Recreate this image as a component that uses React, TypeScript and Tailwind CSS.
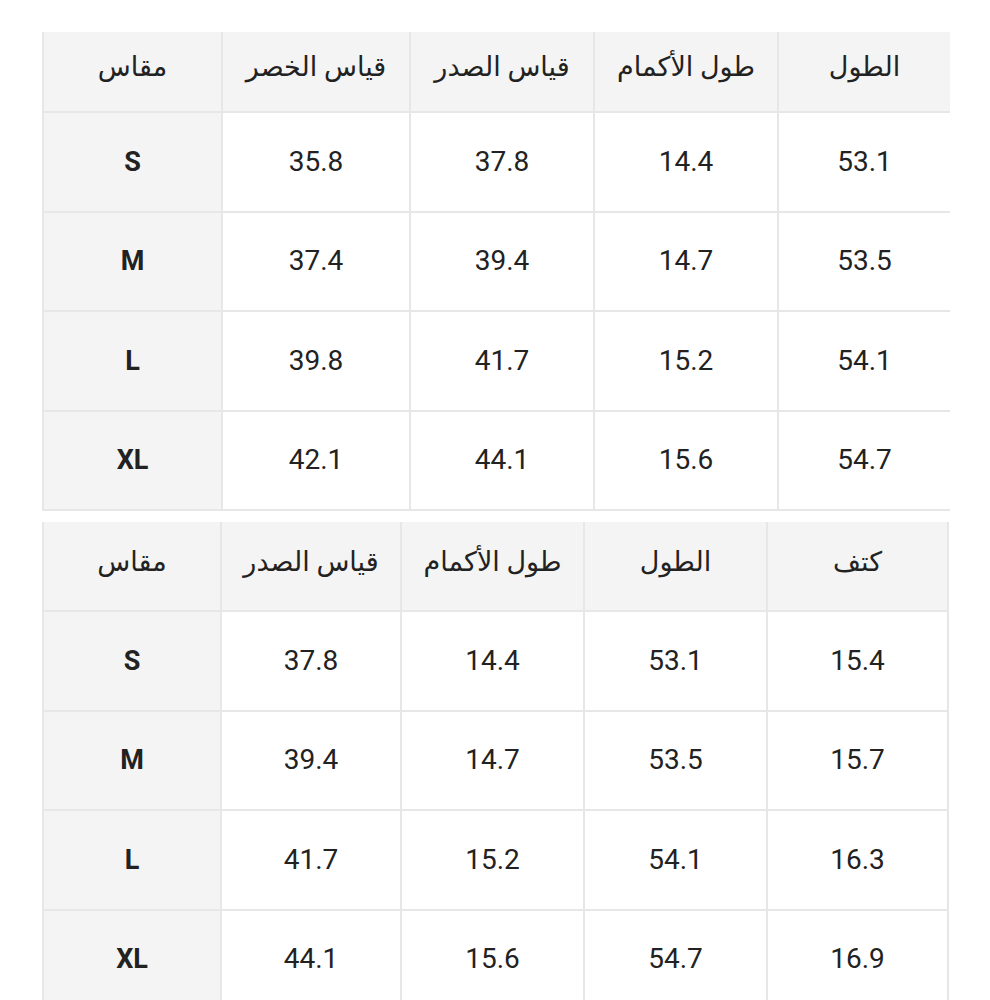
const tableOne = {
  cols: "grid-cols-[179px_188px_184px_184px_171px]",
  headers: ["مقاس", "قياس الخصر", "قياس الصدر", "طول الأكمام", "الطول"],
  rows: [
    ["S", "35.8", "37.8", "14.4", "53.1"],
    ["M", "37.4", "39.4", "14.7", "53.5"],
    ["L", "39.8", "41.7", "15.2", "54.1"],
    ["XL", "42.1", "44.1", "15.6", "54.7"],
  ],
};

const tableTwo = {
  cols: "grid-cols-[178px_180px_183px_183px_181px]",
  headers: ["مقاس", "قياس الصدر", "طول الأكمام", "الطول", "كتف"],
  rows: [
    ["S", "37.8", "14.4", "53.1", "15.4"],
    ["M", "39.4", "14.7", "53.5", "15.7"],
    ["L", "41.7", "15.2", "54.1", "16.3"],
    ["XL", "44.1", "15.6", "54.7", "16.9"],
  ],
};

interface SizeTableProps {
  cols: string;
  headers: string[];
  rows: string[][];
  headerHeight: string;
  rightBorder?: boolean;
}

function SizeTable({ cols, headers, rows, headerHeight, rightBorder }: SizeTableProps) {
  const last = headers.length - 1;
  const edge = (i: number) =>
    i === last && !rightBorder ? "" : "border-r-2 border-r-[#e7e7e7]";

  return (
    <div className={`grid ${cols} border-l-2 border-l-[#e7e7e7]`}>
      {headers.map((h, i) => (
        <div
          key={h}
          dir="rtl"
          className={`flex ${headerHeight} items-center justify-center border-b-2 border-b-[#e7e7e7] ${edge(i)} bg-[#f4f4f4] pb-2 text-[27px] text-[#222]`}
        >
          {h}
        </div>
      ))}
      {rows.map((row) =>
        row.map((v, i) => (
          <div
            key={row[0] + i}
            className={`flex h-[99.5px] items-center justify-center border-b-2 border-b-[#e7e7e7] ${edge(i)} ${
              i === 0 ? "bg-[#f4f4f4] text-[27px] font-bold" : "bg-white text-[28px]"
            } text-[#222]`}
          >
            {v}
          </div>
        ))
      )}
    </div>
  );
}

export default function App() {
  return (
    <div
      className="min-h-[1000px] overflow-hidden bg-white pl-[42px] pt-[32px]"
      style={{ fontFamily: "Roboto, 'DejaVu Sans', sans-serif" }}
    >
      <SizeTable {...tableOne} headerHeight="h-[81px]" />
      <div className="mt-[11px]">
        <SizeTable {...tableTwo} headerHeight="h-[90px]" rightBorder />
      </div>
    </div>
  );
}
